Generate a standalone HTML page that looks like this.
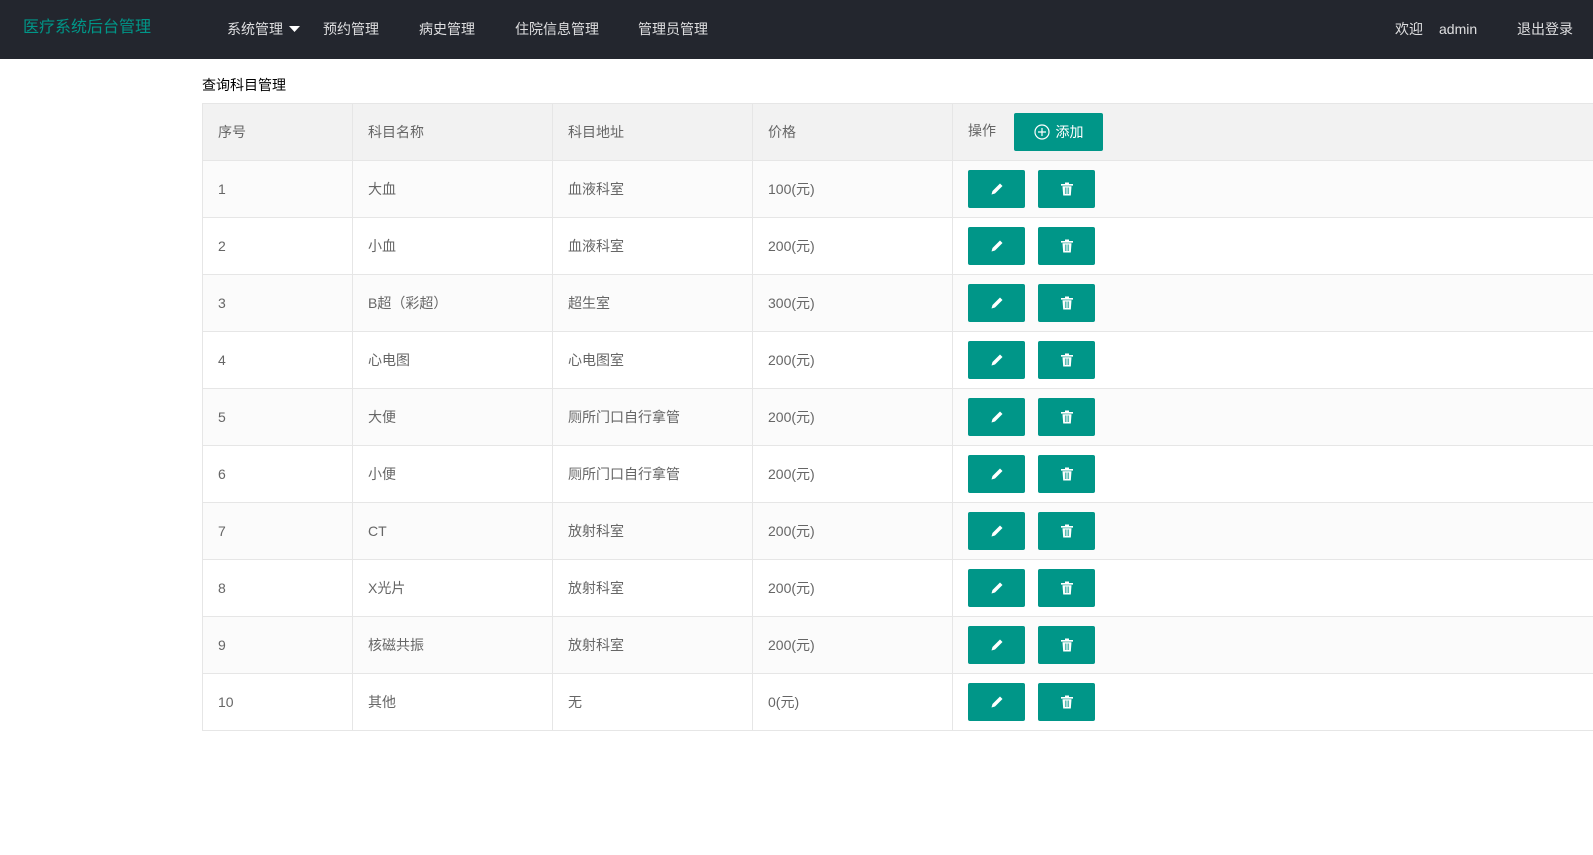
<!DOCTYPE html>
<html><head><meta charset="utf-8"><style>
body{margin:0;width:1593px;height:855px;background:#fff;font-family:"Liberation Sans","Noto Sans CJK SC",sans-serif;overflow:hidden;position:relative}
.nav{position:absolute;left:0;top:0;width:1593px;height:59px;background:#23262e;color:#fff;font-size:14px}
.nav span{position:absolute;top:20px;line-height:18px;color:rgba(255,255,255,.85)}
.logo{color:#009688!important;font-size:16px;left:23px}
.title{position:absolute;left:202px;top:75px;font-size:14px;color:#000}
table{position:absolute;left:202px;top:103px;border-collapse:collapse;font-size:14px;color:#666;width:1420px}
td{border:1px solid #e6e6e6;height:57px;padding:0 0 0 15px;box-sizing:border-box}
tr.h td{background:#f2f2f2}
tr.o td{background:#fff}
tr.e td{background:#fbfbfb}
.b{display:inline-block;width:57px;height:38px;background:#009688;border-radius:2px;vertical-align:middle;position:relative}
.b+.b{margin-left:13px}
.b svg{position:absolute;left:50%;top:50%;transform:translate(-50%,-50%)}
.add{display:inline-block;width:89px;height:38px;background:#009688;border-radius:2px;color:#fff;vertical-align:middle;margin-left:18px;line-height:38px;font-size:14px;text-align:center}
</style></head><body>
<div class="nav">
<span class="logo" style="top:19px">医疗系统后台管理</span>
<span style="left:227px">系统管理</span>
<svg style="position:absolute;left:289px;top:26px" width="11" height="7"><path d="M0 0H11L5.5 6Z" fill="#fff"/></svg>
<span style="left:323px">预约管理</span>
<span style="left:419px">病史管理</span>
<span style="left:515px">住院信息管理</span>
<span style="left:638px">管理员管理</span>
<span style="left:1395px">欢迎</span>
<span style="left:1439px">admin</span>
<span style="left:1517px">退出登录</span>
</div>
<div class="title">查询科目管理</div>
<table>
<colgroup><col style="width:150px"><col style="width:200px"><col style="width:200px"><col style="width:200px"><col></colgroup>
<tr class="h"><td>序号</td><td>科目名称</td><td>科目地址</td><td>价格</td><td>操作<span class="add"><svg width="16" height="16" style="vertical-align:-3px;margin-right:6px"><circle cx="8" cy="8" r="7" fill="none" stroke="#fff" stroke-width="1.2"/><path d="M8 4V12M4 8H12" stroke="#fff" stroke-width="1.2"/></svg>添加</span></td></tr>
<tr class="e"><td>1</td><td>大血</td><td>血液科室</td><td>100(元)</td><td><span class="b"><svg width="13" height="13"><path d="M1 12L2 8.5L9.5 1L12 3.5L4.5 11Z" fill="#fff"/></svg></span><span class="b"><svg width="13" height="14"><path d="M0.5 2H12.5V3.6H0.5ZM4.5 0.5H8.5V2H4.5ZM2 4.2H11L10.3 13.5H2.7Z" fill="#fff"/><path d="M4.8 5.5V12M6.5 5.5V12M8.2 5.5V12" stroke="#009688" stroke-width=".7"/></svg></span></td></tr>
<tr class="o"><td>2</td><td>小血</td><td>血液科室</td><td>200(元)</td><td><span class="b"><svg width="13" height="13"><path d="M1 12L2 8.5L9.5 1L12 3.5L4.5 11Z" fill="#fff"/></svg></span><span class="b"><svg width="13" height="14"><path d="M0.5 2H12.5V3.6H0.5ZM4.5 0.5H8.5V2H4.5ZM2 4.2H11L10.3 13.5H2.7Z" fill="#fff"/><path d="M4.8 5.5V12M6.5 5.5V12M8.2 5.5V12" stroke="#009688" stroke-width=".7"/></svg></span></td></tr>
<tr class="e"><td>3</td><td>B超（彩超）</td><td>超生室</td><td>300(元)</td><td><span class="b"><svg width="13" height="13"><path d="M1 12L2 8.5L9.5 1L12 3.5L4.5 11Z" fill="#fff"/></svg></span><span class="b"><svg width="13" height="14"><path d="M0.5 2H12.5V3.6H0.5ZM4.5 0.5H8.5V2H4.5ZM2 4.2H11L10.3 13.5H2.7Z" fill="#fff"/><path d="M4.8 5.5V12M6.5 5.5V12M8.2 5.5V12" stroke="#009688" stroke-width=".7"/></svg></span></td></tr>
<tr class="o"><td>4</td><td>心电图</td><td>心电图室</td><td>200(元)</td><td><span class="b"><svg width="13" height="13"><path d="M1 12L2 8.5L9.5 1L12 3.5L4.5 11Z" fill="#fff"/></svg></span><span class="b"><svg width="13" height="14"><path d="M0.5 2H12.5V3.6H0.5ZM4.5 0.5H8.5V2H4.5ZM2 4.2H11L10.3 13.5H2.7Z" fill="#fff"/><path d="M4.8 5.5V12M6.5 5.5V12M8.2 5.5V12" stroke="#009688" stroke-width=".7"/></svg></span></td></tr>
<tr class="e"><td>5</td><td>大便</td><td>厕所门口自行拿管</td><td>200(元)</td><td><span class="b"><svg width="13" height="13"><path d="M1 12L2 8.5L9.5 1L12 3.5L4.5 11Z" fill="#fff"/></svg></span><span class="b"><svg width="13" height="14"><path d="M0.5 2H12.5V3.6H0.5ZM4.5 0.5H8.5V2H4.5ZM2 4.2H11L10.3 13.5H2.7Z" fill="#fff"/><path d="M4.8 5.5V12M6.5 5.5V12M8.2 5.5V12" stroke="#009688" stroke-width=".7"/></svg></span></td></tr>
<tr class="o"><td>6</td><td>小便</td><td>厕所门口自行拿管</td><td>200(元)</td><td><span class="b"><svg width="13" height="13"><path d="M1 12L2 8.5L9.5 1L12 3.5L4.5 11Z" fill="#fff"/></svg></span><span class="b"><svg width="13" height="14"><path d="M0.5 2H12.5V3.6H0.5ZM4.5 0.5H8.5V2H4.5ZM2 4.2H11L10.3 13.5H2.7Z" fill="#fff"/><path d="M4.8 5.5V12M6.5 5.5V12M8.2 5.5V12" stroke="#009688" stroke-width=".7"/></svg></span></td></tr>
<tr class="e"><td>7</td><td>CT</td><td>放射科室</td><td>200(元)</td><td><span class="b"><svg width="13" height="13"><path d="M1 12L2 8.5L9.5 1L12 3.5L4.5 11Z" fill="#fff"/></svg></span><span class="b"><svg width="13" height="14"><path d="M0.5 2H12.5V3.6H0.5ZM4.5 0.5H8.5V2H4.5ZM2 4.2H11L10.3 13.5H2.7Z" fill="#fff"/><path d="M4.8 5.5V12M6.5 5.5V12M8.2 5.5V12" stroke="#009688" stroke-width=".7"/></svg></span></td></tr>
<tr class="o"><td>8</td><td>X光片</td><td>放射科室</td><td>200(元)</td><td><span class="b"><svg width="13" height="13"><path d="M1 12L2 8.5L9.5 1L12 3.5L4.5 11Z" fill="#fff"/></svg></span><span class="b"><svg width="13" height="14"><path d="M0.5 2H12.5V3.6H0.5ZM4.5 0.5H8.5V2H4.5ZM2 4.2H11L10.3 13.5H2.7Z" fill="#fff"/><path d="M4.8 5.5V12M6.5 5.5V12M8.2 5.5V12" stroke="#009688" stroke-width=".7"/></svg></span></td></tr>
<tr class="e"><td>9</td><td>核磁共振</td><td>放射科室</td><td>200(元)</td><td><span class="b"><svg width="13" height="13"><path d="M1 12L2 8.5L9.5 1L12 3.5L4.5 11Z" fill="#fff"/></svg></span><span class="b"><svg width="13" height="14"><path d="M0.5 2H12.5V3.6H0.5ZM4.5 0.5H8.5V2H4.5ZM2 4.2H11L10.3 13.5H2.7Z" fill="#fff"/><path d="M4.8 5.5V12M6.5 5.5V12M8.2 5.5V12" stroke="#009688" stroke-width=".7"/></svg></span></td></tr>
<tr class="o"><td>10</td><td>其他</td><td>无</td><td>0(元)</td><td><span class="b"><svg width="13" height="13"><path d="M1 12L2 8.5L9.5 1L12 3.5L4.5 11Z" fill="#fff"/></svg></span><span class="b"><svg width="13" height="14"><path d="M0.5 2H12.5V3.6H0.5ZM4.5 0.5H8.5V2H4.5ZM2 4.2H11L10.3 13.5H2.7Z" fill="#fff"/><path d="M4.8 5.5V12M6.5 5.5V12M8.2 5.5V12" stroke="#009688" stroke-width=".7"/></svg></span></td></tr>
</table>
</body></html>
